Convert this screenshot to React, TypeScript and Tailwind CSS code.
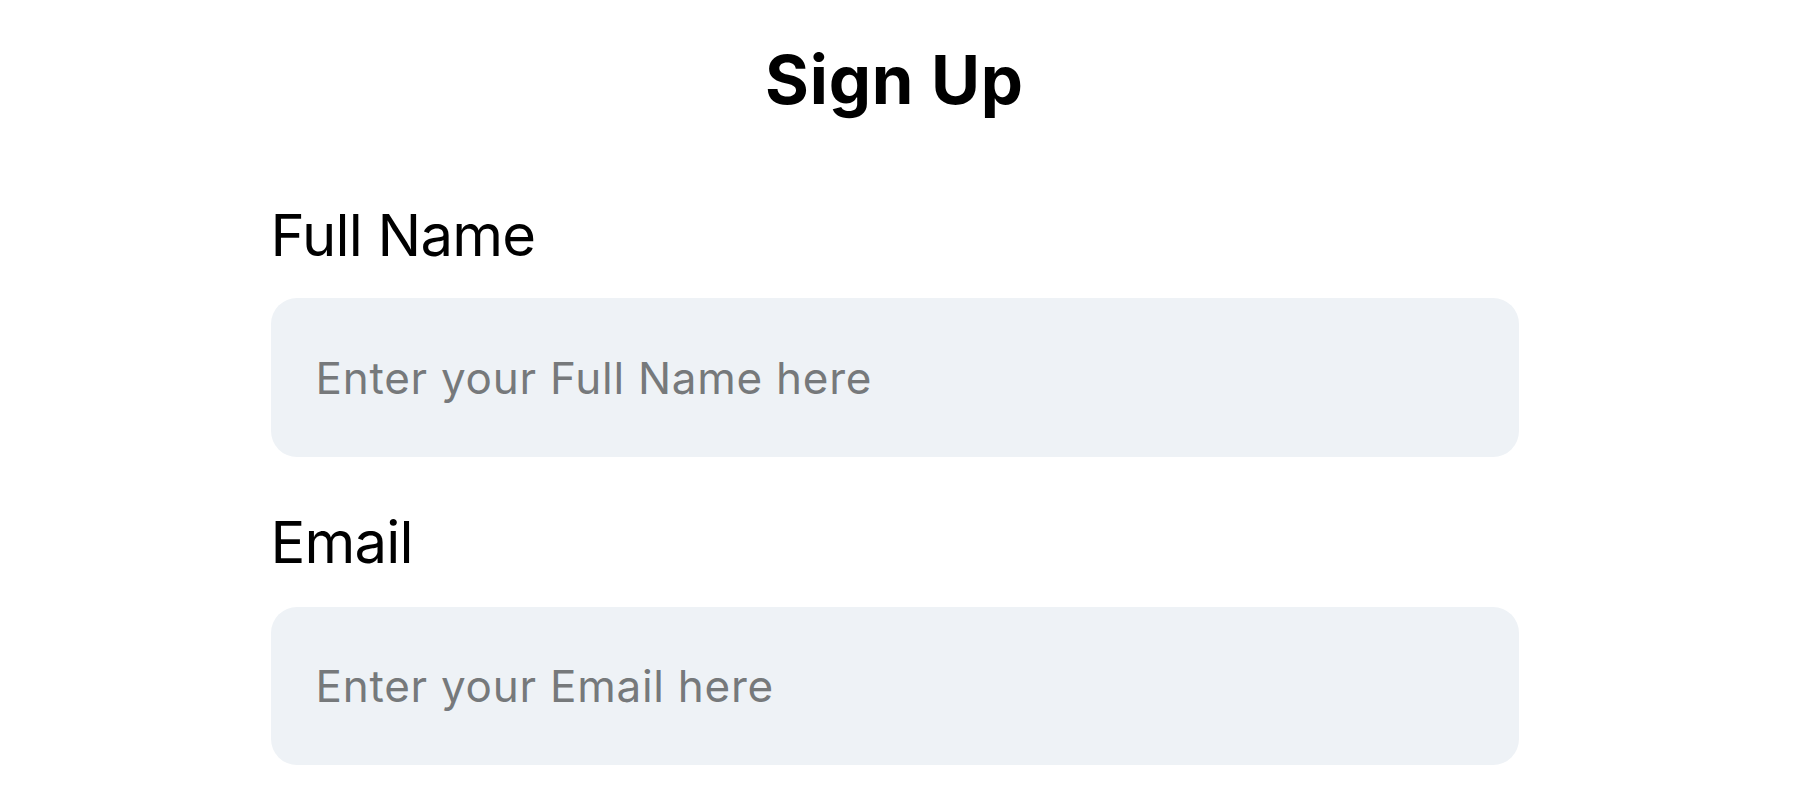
export default function App() {
  return (
    <div className="min-h-screen bg-white" style={{ fontFamily: "Inter, 'Noto Sans', sans-serif" }}>
      <div className="flex justify-center pr-[6px]">
        <div className="flex w-[1248px] flex-col pt-[46px]">
          <h1 className="text-center text-[67px] font-bold leading-none tracking-[0.8px] text-black">Sign Up</h1>
          <form className="mt-[93px] flex flex-col">
            <label htmlFor="fullname" className="text-[58px] leading-none tracking-[-0.8px] text-black">
              Full Name
            </label>
            <input
              id="fullname"
              type="text"
              placeholder="Enter your Full Name here"
              className="mt-[34px] h-[159px] rounded-[26px] bg-[#eef2f6] px-[45px] text-[44px] tracking-[0.75px] text-black outline-none placeholder:text-[#76797b]"
            />
            <label htmlFor="email" className="mt-[56px] text-[58px] leading-none tracking-[-0.8px] text-black">
              Email
            </label>
            <input
              id="email"
              type="email"
              placeholder="Enter your Email here"
              className="mt-[36px] h-[158px] rounded-[26px] bg-[#eef2f6] px-[45px] text-[44px] tracking-[0.75px] text-black outline-none placeholder:text-[#76797b]"
            />
          </form>
        </div>
      </div>
    </div>
  );
}
